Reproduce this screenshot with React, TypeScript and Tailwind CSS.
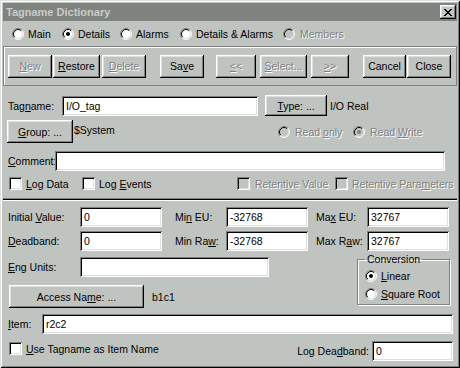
import React from "react";

const raised =
  "shadow-[inset_-1px_-1px_#000,inset_1px_1px_#fff,inset_-2px_-2px_#808080,inset_2px_2px_#dfdfdf]";
const sunken =
  "shadow-[inset_1px_1px_#808080,inset_-1px_-1px_#fff,inset_2px_2px_#000,inset_-2px_-2px_#dfdfdf]";
const dim = "text-[#808080] [text-shadow:1px_1px_0_#fff]";

function M({ t, u }: { t: string; u?: number }) {
  if (u === undefined) return <span className="whitespace-nowrap">{t}</span>;
  return (
    <span className="whitespace-nowrap">
      {t.slice(0, u)}
      <span className="underline decoration-1 underline-offset-[1px]">{t[u]}</span>
      {t.slice(u + 1)}
    </span>
  );
}

function Btn({
  t,
  u,
  off,
  className = "",
}: {
  t: string;
  u?: number;
  off?: boolean;
  className?: string;
}) {
  return (
    <div
      className={[
        "flex h-[23px] shrink-0 items-center justify-center bg-[#c0c4c0]",
        raised,
        off ? dim : "text-black",
        className,
      ].join(" ")}
    >
      <M t={t} u={u} />
    </div>
  );
}

function Field({ v, className = "" }: { v?: string; className?: string }) {
  return (
    <div className={["flex h-[20px] shrink-0 items-center bg-white pl-[4px] text-black", sunken, className].join(" ")}>
      {v}
    </div>
  );
}

function Radio({ on, off }: { on?: boolean; off?: boolean }) {
  return (
    <svg width="12" height="12" viewBox="0 0 12 12" className="shrink-0">
      <circle cx="6" cy="6" r="4.5" fill={off ? "#c0c4c0" : "#fff"} />
      <path d="M2.11 9.89A5.5 5.5 0 0 1 9.89 2.11" stroke="#808080" fill="none" />
      <path d="M9.89 2.11A5.5 5.5 0 0 1 2.11 9.89" stroke="#fff" fill="none" />
      <path d="M2.82 9.18A4.5 4.5 0 0 1 9.18 2.82" stroke="#000" fill="none" />
      <path d="M9.18 2.82A4.5 4.5 0 0 1 2.82 9.18" stroke="#dfdfdf" fill="none" />
      {on && <circle cx="6" cy="6" r="2" fill={off ? "#808080" : "#000"} />}
    </svg>
  );
}

function Check({ off }: { off?: boolean }) {
  return <div className={["h-[13px] w-[13px] shrink-0", off ? "bg-[#c0c4c0]" : "bg-white", sunken].join(" ")} />;
}

function CloseGlyph() {
  const rows = ["11000011", "01100110", "00111100", "00011000", "00111100", "01100110", "11000011"];
  return (
    <svg width="8" height="7" viewBox="0 0 8 7" shapeRendering="crispEdges">
      {rows.map((r, y) =>
        r.split("").map((c, x) => (c === "1" ? <rect key={`${x}-${y}`} x={x} y={y} width="1" height="1" fill="#000" /> : null))
      )}
    </svg>
  );
}

export default function App() {
  return (
    <div
      className={[
        "flex h-[368px] w-[460px] flex-col overflow-hidden bg-[#c0c4c0] p-[3px] text-[10.5px] leading-[12px] text-black",
        "font-['Liberation_Sans',Arial,sans-serif]",
        "shadow-[inset_1px_1px_#dfdfdf,inset_-1px_-1px_#000,inset_2px_2px_#fff,inset_-2px_-2px_#808080]",
      ].join(" ")}
    >
      {/* title bar */}
      <div className="flex h-[18px] shrink-0 items-center justify-between bg-[#808480] pl-[3px]">
        <span className="text-[11px] font-bold text-[#c8ccc8]">Tagname Dictionary</span>
        <div className={["mr-[1px] flex h-[14px] w-[16px] items-center justify-center bg-[#c0c4c0]", raised].join(" ")}>
          <CloseGlyph />
        </div>
      </div>

      {/* view radios */}
      <div className="flex h-[25px] shrink-0 items-center pl-[9px]">
        <div className="flex w-[50px] items-center gap-[4px]">
          <Radio /> Main
        </div>
        <div className="flex w-[58px] items-center gap-[4px]">
          <Radio on /> Details
        </div>
        <div className="flex w-[60px] items-center gap-[4px]">
          <Radio /> Alarms
        </div>
        <div className="flex w-[103px] items-center gap-[4px]">
          <Radio /> Details &amp; Alarms
        </div>
        <div className="flex items-center gap-[5px]">
          <Radio off />
          <span className={dim}>Members</span>
        </div>
      </div>

      {/* button bar */}
      <div className="flex h-[40px] shrink-0 items-center border border-[#808080] shadow-[inset_1px_1px_0_#fff]">
        <Btn t="New" u={0} off className="ml-[4px] w-[44px]" />
        <Btn t="Restore" u={0} className="ml-[1px] w-[47px]" />
        <Btn t="Delete" u={0} off className="ml-[2px] w-[44px]" />
        <Btn t="Save" u={2} className="ml-[14px] w-[44px]" />
        <Btn t="<<" u={0} off className="ml-[12px] w-[40px]" />
        <Btn t="Select..." u={0} off className="ml-[4px] w-[47px]" />
        <Btn t=">>" u={0} off className="ml-[4px] w-[38px]" />
        <Btn t="Cancel" className="ml-[14px] w-[43px]" />
        <Btn t="Close" className="ml-[1px] w-[44px]" />
      </div>

      {/* details */}
      <div className="flex h-[113px] shrink-0 flex-col border-b border-[#808080] pl-[5px] pt-[9px]">
        <div className="flex h-[21px] items-center">
          <span className="w-[54px]">
            <M t="Tagname:" u={3} />
          </span>
          <Field v="I/O_tag" className="w-[196px]" />
          <Btn t="Type: ..." u={0} className="ml-[7px] !h-[21px] w-[62px]" />
          <span className="ml-[3px]">I/O Real</span>
        </div>
        <div className="mt-[4px] flex h-[23px] items-center">
          <Btn t="Group: ..." u={0} className="-ml-px w-[66px]" />
          <span className="ml-[1px] w-[204px] self-start pt-[4px]">$System</span>
          <div className="flex w-[75px] items-center gap-[5px]">
            <Radio off />
            <span className={dim}>
              <M t="Read only" u={5} />
            </span>
          </div>
          <div className="flex items-center gap-[5px]">
            <Radio on off />
            <span className={dim}>
              <M t="Read Write" u={5} />
            </span>
          </div>
        </div>
        <div className="mt-[8px] flex h-[20px] items-center">
          <span className="w-[47px]">
            <M t="Comment:" u={0} />
          </span>
          <Field className="w-[390px]" />
        </div>
        <div className="mt-[6px] flex h-[13px] items-center">
          <div className="ml-[1px] flex w-[73px] items-center gap-[4px]">
            <Check />
            <M t="Log Data" u={0} />
          </div>
          <div className="flex w-[155px] items-center gap-[4px]">
            <Check />
            <M t="Log Events" u={4} />
          </div>
          <div className="flex w-[98px] items-center gap-[5px]">
            <Check off />
            <span className={dim}>
              <M t="Retentive Value" u={6} />
            </span>
          </div>
          <div className="flex items-center gap-[4px]">
            <Check off />
            <span className={dim}>
              <M t="Retentive Parameters" u={14} />
            </span>
          </div>
        </div>
      </div>

      {/* engineering / io */}
      <div className="flex flex-1 flex-col border-t border-black pl-[5px] pr-[4px] pt-[7px] shadow-[inset_0_1px_0_#fff]">
        <div className="flex h-[20px] items-center">
          <span className="w-[72px]">
            <M t="Initial Value:" u={8} />
          </span>
          <Field v="0" className="w-[82px]" />
          <span className="ml-[13px] w-[51px]">
            <M t="Min EU:" u={2} />
          </span>
          <Field v="-32768" className="w-[82px]" />
          <span className="ml-[8px] w-[51px]">
            <M t="Max EU:" u={2} />
          </span>
          <Field v="32767" className="w-[82px]" />
        </div>
        <div className="mt-[4px] flex h-[20px] items-center">
          <span className="w-[72px]">
            <M t="Deadband:" u={0} />
          </span>
          <Field v="0" className="w-[82px]" />
          <span className="ml-[13px] w-[51px]">
            <M t="Min Raw:" u={6} />
          </span>
          <Field v="-32768" className="w-[82px]" />
          <span className="ml-[8px] w-[51px]">
            <M t="Max Raw:" u={5} />
          </span>
          <Field v="32767" className="w-[82px]" />
        </div>
        <div className="mt-[2px] flex items-start">
          <div className="flex w-[349px] flex-col pt-[4px]">
            <div className="flex h-[20px] items-center">
              <span className="w-[72px]">
                <M t="Eng Units:" u={0} />
              </span>
              <Field className="w-[189px]" />
            </div>
            <div className="mt-[8px] flex h-[23px] items-center">
              <Btn t="Access Name: ..." u={9} className="ml-[1px] w-[135px]" />
              <span className="ml-[8px]">b1c1</span>
            </div>
          </div>
          <fieldset className="w-[93px] border border-[#808080] px-[7px] pb-[1px] shadow-[1px_1px_0_#fff,inset_1px_1px_0_#fff]">
            <legend className="px-[2px]">Conversion</legend>
            <div className="mt-[2px] flex h-[18px] items-center gap-[4px]">
              <Radio on />
              <M t="Linear" u={0} />
            </div>
            <div className="flex h-[18px] items-center gap-[4px]">
              <Radio />
              <M t="Square Root" u={0} />
            </div>
          </fieldset>
        </div>
        <div className="mt-[6px] flex h-[20px] items-center">
          <span className="w-[34px]">
            <M t="Item:" u={0} />
          </span>
          <Field v="r2c2" className="flex-1" />
        </div>
        <div className="mt-[7px] flex h-[20px] items-center">
          <div className="ml-[1px] flex flex-1 items-center gap-[4px] self-start pt-[1px]">
            <Check />
            <M t="Use Tagname as Item Name" u={0} />
          </div>
          <span className="mr-[3px]">
            <M t="Log Deadband:" u={7} />
          </span>
          <Field v="0" className="w-[81px]" />
        </div>
      </div>
    </div>
  );
}
